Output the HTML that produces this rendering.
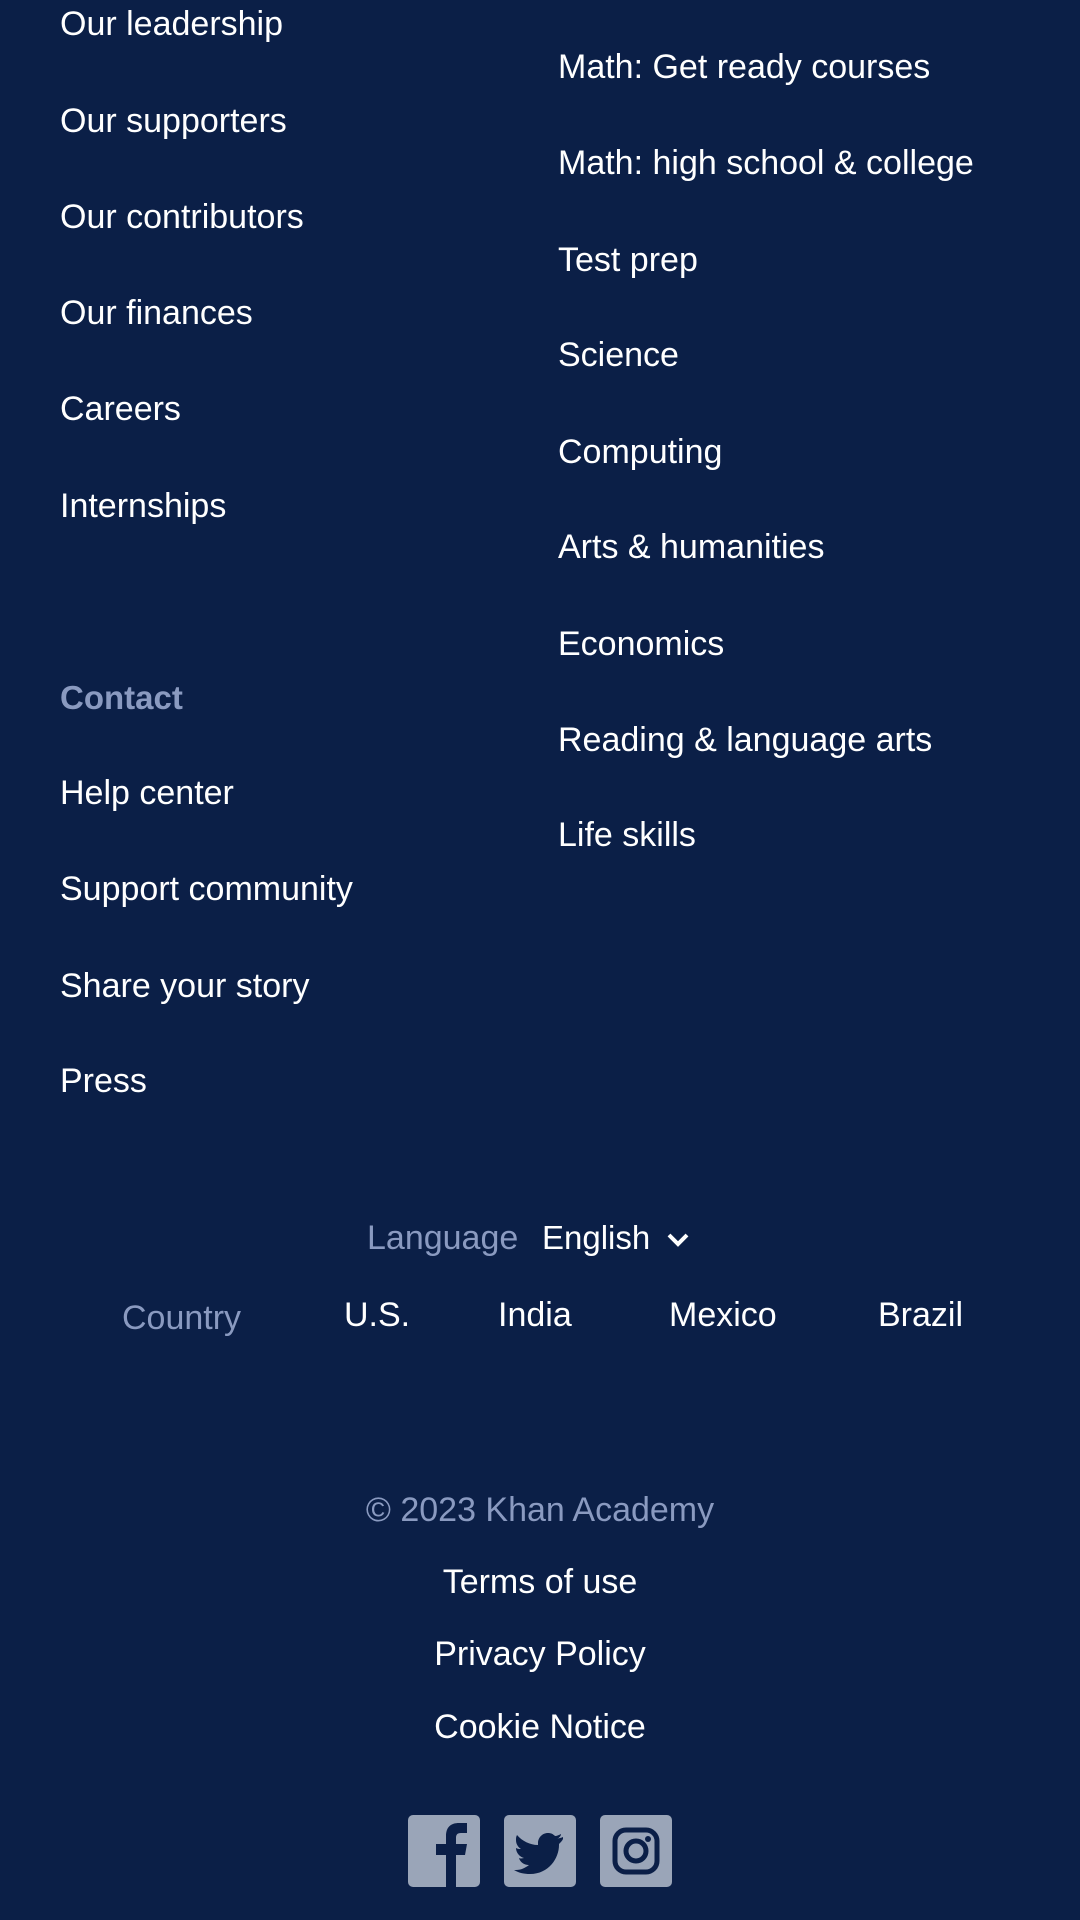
<!DOCTYPE html>
<html><head><meta charset="utf-8"><style>
html,body{margin:0;padding:0}
body{width:1080px;height:1920px;background:#0b1f47;position:relative;overflow:hidden;font-family:"Liberation Sans",sans-serif;color:#fff}
.t{position:absolute;font-size:34px;line-height:40px;white-space:nowrap}
.g{color:#8a9ac0}
.c{left:0;width:1080px;text-align:center}
.ic{position:absolute;top:1815px;width:72px;height:72px;background:#9aa5b8;border-radius:5px;overflow:hidden}
</style></head><body>
<div class="t" style="left:60px;top:4px">Our leadership</div>
<div class="t" style="left:60px;top:101px">Our supporters</div>
<div class="t" style="left:60px;top:197px">Our contributors</div>
<div class="t" style="left:60px;top:293px">Our finances</div>
<div class="t" style="left:60px;top:389px">Careers</div>
<div class="t" style="left:60px;top:486px">Internships</div>
<div class="t g" style="left:60px;top:678px;font-weight:bold;font-size:33px">Contact</div>
<div class="t" style="left:60px;top:773px">Help center</div>
<div class="t" style="left:60px;top:869px">Support community</div>
<div class="t" style="left:60px;top:966px">Share your story</div>
<div class="t" style="left:60px;top:1061px">Press</div>

<div class="t" style="left:558px;top:47px">Math: Get ready courses</div>
<div class="t" style="left:558px;top:143px">Math: high school &amp; college</div>
<div class="t" style="left:558px;top:240px">Test prep</div>
<div class="t" style="left:558px;top:335px">Science</div>
<div class="t" style="left:558px;top:432px">Computing</div>
<div class="t" style="left:558px;top:527px">Arts &amp; humanities</div>
<div class="t" style="left:558px;top:624px">Economics</div>
<div class="t" style="left:558px;top:720px">Reading &amp; language arts</div>
<div class="t" style="left:558px;top:815px">Life skills</div>

<div class="t g" style="left:367px;top:1218px">Language</div>
<div class="t" style="left:542px;top:1218px;font-size:33px">English</div>
<svg style="position:absolute;left:666px;top:1232px" width="24" height="16" viewBox="0 0 24 16"><path d="M3 3l9 9 9-9" fill="none" stroke="#fff" stroke-width="4"/></svg>
<div class="t g" style="left:122px;top:1298px">Country</div>
<div class="t" style="left:344px;top:1295px">U.S.</div>
<div class="t" style="left:498px;top:1295px">India</div>
<div class="t" style="left:669px;top:1295px">Mexico</div>
<div class="t" style="left:878px;top:1295px">Brazil</div>

<div class="t g c" style="top:1490px">© 2023 Khan Academy</div>
<div class="t c" style="top:1562px">Terms of use</div>
<div class="t c" style="top:1634px">Privacy Policy</div>
<div class="t c" style="top:1707px">Cookie Notice</div>

<div class="ic" style="left:408px"><svg width="72" height="72" viewBox="0 0 72 72"><path d="M38 72V40h-10v-11h10v-8c0-9 5-13 13-13h8v10h-6c-4 0-5 2-5 5v6h11l-2 11h-9v32z" fill="#0b1f47"/></svg></div>
<div class="ic" style="left:504px"><svg width="72" height="72" viewBox="0 0 72 72"><path d="M59 22c-2 1-4 1-6 2 2-1 4-3 4-5-2 1-4 2-6 2-2-2-4-3-7-3-6 0-10 5-10 10v2c-8 0-16-4-21-10-1 2-1 3-1 5 0 4 2 7 5 9-2 0-3 0-5-1 0 5 4 9 8 10-1 0-3 1-5 0 1 4 5 7 10 7-4 3-8 5-13 5h-2c5 3 10 4 16 4 19 0 29-16 29-29v-1c2-2 3-3 4-5z" fill="#0b1f47"/></svg></div>
<div class="ic" style="left:600px"><svg width="72" height="72" viewBox="0 0 72 72"><rect x="15" y="15" width="42" height="42" rx="11" fill="none" stroke="#0b1f47" stroke-width="5"/><circle cx="36" cy="36" r="10" fill="none" stroke="#0b1f47" stroke-width="5"/><circle cx="48" cy="24" r="3" fill="#0b1f47"/></svg></div>
</body></html>
